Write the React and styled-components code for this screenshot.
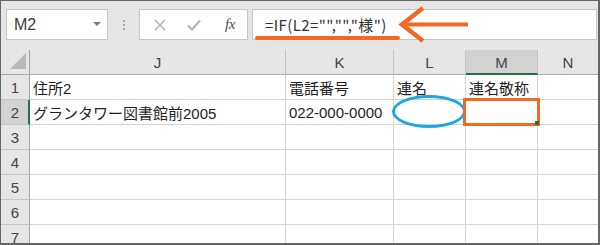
import React from "react";
import styled, { createGlobalStyle } from "styled-components";

const Global = createGlobalStyle`
  html, body { margin: 0; padding: 0; background: #fff; }
  * { box-sizing: border-box; }
`;

const UI = `"Liberation Sans", "Noto Sans CJK JP", sans-serif`;

const Frame = styled.div`
  position: relative;
  width: 600px;
  height: 245px;
  border-style: solid;
  border-color: #666;
  border-width: 1px 2px 2px 1px;
  background: #e6e6e6;
  overflow: hidden;
  display: flex;
  flex-direction: column;
  font-family: ${UI};
`;

const Toolbar = styled.div`
  position: relative;
  height: 49px;
  flex: none;
  display: flex;
  align-items: flex-start;
  padding: 8px 1px 0 5px;
`;

const NameBox = styled.div`
  width: 102px;
  height: 31px;
  background: #fff;
  border: 1px solid #c6c6c6;
  display: flex;
  align-items: center;
  justify-content: space-between;
  padding: 0 6px 0 7px;
  font-size: 16px;
  color: #3c3c3c;
`;

const Caret = styled.span`
  width: 0;
  height: 0;
  border-left: 4px solid transparent;
  border-right: 4px solid transparent;
  border-top: 4px solid #7c7c7c;
  margin-top: -2px;
`;

const Separator = styled.div`
  width: 31px;
  height: 31px;
  display: flex;
  flex-direction: column;
  align-items: center;
  justify-content: center;
  gap: 2px;
`;

const Dot = styled.span`
  width: 2px;
  height: 2px;
  background: #a8a8a8;
`;

const FxBox = styled.div`
  width: 109px;
  height: 31px;
  background: #fff;
  border: 1px solid #c6c6c6;
  display: flex;
  align-items: center;
  padding-left: 14px;
`;

const IconSlot = styled.span`
  width: ${(p) => p.$w}px;
  display: flex;
  justify-content: center;
  align-items: center;
`;

const FxLabel = styled.span`
  font-family: "Liberation Serif", serif;
  font-style: italic;
  font-size: 15px;
  color: #505050;
  letter-spacing: -0.5px;
`;

const FormulaBox = styled.div`
  flex: 1;
  height: 31px;
  margin-left: 4px;
  background: #fff;
  border: 1px solid #c6c6c6;
  display: flex;
  align-items: center;
  padding-left: 12px;
  font-family: "Noto Sans CJK JP", sans-serif;
  font-size: 15px;
  letter-spacing: 0.4px;
  color: #333;
`;

const Overlay = styled.svg`
  position: absolute;
  left: 0;
  top: 0;
  pointer-events: none;
`;

const Grid = styled.div`
  display: grid;
  grid-template-columns: 29px 256px 108px 72px 72px 60px;
  grid-auto-rows: 25px;
`;

const ColHead = styled.div`
  background: ${(p) => (p.$sel ? "#d2d2d2" : "#e6e6e6")};
  border-right: ${(p) => (p.$last ? "none" : "1px solid #c2c2c2")};
  border-bottom: ${(p) => (p.$sel ? "2px solid #217346" : "1px solid #ababab")};
  display: flex;
  align-items: center;
  justify-content: center;
  font-size: 15px;
  color: #444;
  padding-top: 1px;
`;

const Corner = styled.div`
  position: relative;
  background: #e6e6e6;
  border-right: 1px solid #9e9e9e;
  border-bottom: 1px solid #ababab;
  &::after {
    content: "";
    position: absolute;
    right: 3px;
    bottom: 5px;
    width: 0;
    height: 0;
    border-left: 16px solid transparent;
    border-bottom: 16px solid #b9b9b9;
  }
`;

const RowHead = styled.div`
  background: ${(p) => (p.$sel ? "#d2d2d2" : "#e6e6e6")};
  border-right: ${(p) => (p.$sel ? "2px solid #217346" : "1px solid #9e9e9e")};
  border-bottom: 1px solid #c6c6c6;
  display: flex;
  align-items: center;
  justify-content: center;
  font-size: 15px;
  color: #444;
  padding-left: ${(p) => (p.$sel ? "1px" : "0")};
`;

const Cell = styled.div`
  position: relative;
  background: #fff;
  border-right: ${(p) => (p.$last ? "none" : "1px solid #d4d4d4")};
  border-bottom: 1px solid #d4d4d4;
  display: flex;
  align-items: center;
  padding-left: 3px;
  font-size: 15px;
  color: #1e1e1e;
  white-space: nowrap;
`;

const Ellipse = styled.span`
  position: absolute;
  z-index: 2;
  left: -2px;
  right: -1px;
  top: -5px;
  bottom: -4px;
  border: 3px solid #1aa8e4;
  border-radius: 50%;
  pointer-events: none;
`;

const Highlight = styled.span`
  position: absolute;
  z-index: 2;
  left: -3px;
  right: -3px;
  top: -2px;
  bottom: -2px;
  border: 3px solid #f26a21;
  pointer-events: none;
  &::after {
    content: "";
    position: absolute;
    right: -2px;
    bottom: -2px;
    width: 4px;
    height: 4px;
    background: #217346;
  }
`;

const columns = ["J", "K", "L", "M", "N"];
const rows = [
  ["住所2", "電話番号", "連名", "連名敬称", ""],
  ["グランタワー図書館前2005", "022-000-0000", "", "", ""],
  ["", "", "", "", ""],
  ["", "", "", "", ""],
  ["", "", "", "", ""],
  ["", "", "", "", ""],
  ["", "", "", "", ""],
];

export default function App() {
  return (
    <>
      <Global />
      <Frame>
        <Toolbar>
          <NameBox>
            <span>M2</span>
            <Caret />
          </NameBox>
          <Separator>
            <Dot />
            <Dot />
            <Dot />
          </Separator>
          <FxBox>
            <IconSlot $w={12}>
              <svg width="12" height="12" viewBox="0 0 12 12">
                <path d="M1 1 L11 11 M11 1 L1 11" stroke="#b4b4b4" strokeWidth="1.6" fill="none" />
              </svg>
            </IconSlot>
            <IconSlot $w={56}>
              <svg width="14" height="12" viewBox="0 0 14 12">
                <path d="M1 6.5 L5 10.5 L13 1.5" stroke="#b4b4b4" strokeWidth="2.2" fill="none" />
              </svg>
            </IconSlot>
            <IconSlot $w={16}>
              <FxLabel>fx</FxLabel>
            </IconSlot>
          </FxBox>
          <FormulaBox>=IF(L2="","","様")</FormulaBox>
          <Overlay width="600" height="49" viewBox="0 0 600 49">
            <line x1="256" y1="37" x2="397" y2="37" stroke="#f26a21" strokeWidth="4" strokeLinecap="round" />
            <line x1="401" y1="23.5" x2="467" y2="23.5" stroke="#f26a21" strokeWidth="4" />
            <polyline
              points="422,7 401,23.5 422,40"
              stroke="#f26a21"
              strokeWidth="4.5"
              fill="none"
              strokeLinejoin="miter"
            />
          </Overlay>
        </Toolbar>
        <Grid>
          <Corner />
          {columns.map((c, i) => (
            <ColHead key={c} $sel={c === "M"} $last={i === columns.length - 1}>
              {c}
            </ColHead>
          ))}
          {rows.map((r, ri) => (
            <React.Fragment key={ri}>
              <RowHead $sel={ri === 1}>{ri + 1}</RowHead>
              {r.map((v, ci) => (
                <Cell key={ci} $last={ci === r.length - 1}>
                  {v}
                  {ri === 1 && ci === 2 && <Ellipse />}
                  {ri === 1 && ci === 3 && <Highlight />}
                </Cell>
              ))}
            </React.Fragment>
          ))}
        </Grid>
      </Frame>
    </>
  );
}
